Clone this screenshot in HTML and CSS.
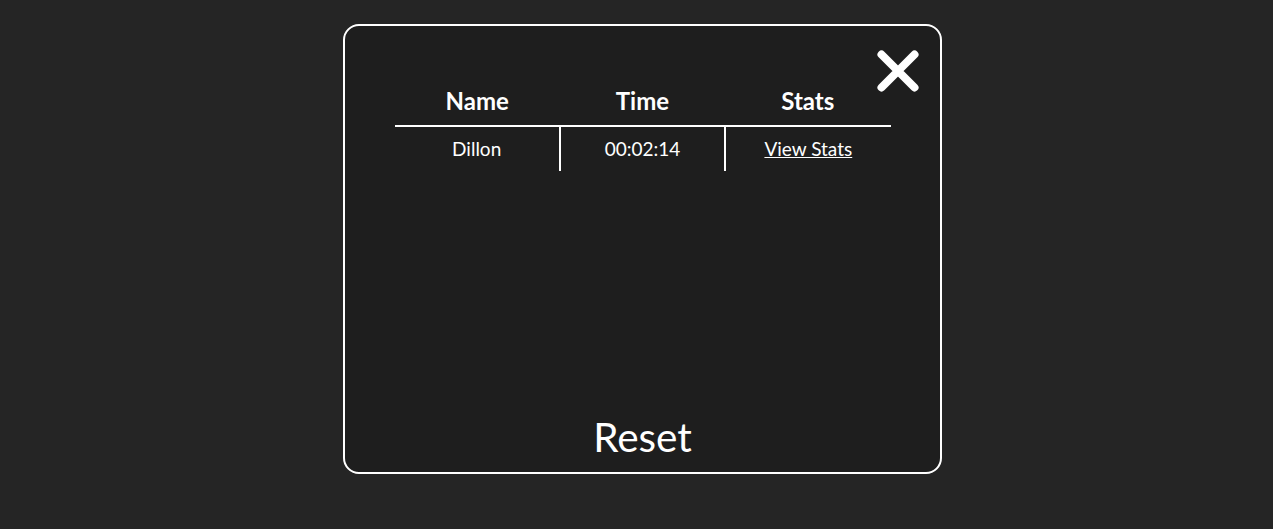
FILE: index.html
```html
<!DOCTYPE html>
<html>
<head>
<meta charset="utf-8">
<link rel="stylesheet" href="styles.css">
</head>
<body>
<div class="page">
  <div class="modal">
    <button class="close" aria-label="Close">
      <svg width="44" height="44" viewBox="0 0 44 44"><path d="M5.5 5.5 L38.5 38.5 M38.5 5.5 L5.5 38.5" stroke="#fff" stroke-width="8" stroke-linecap="round" fill="none"/></svg>
    </button>
    <table class="scores">
      <thead>
        <tr><th>Name</th><th>Time</th><th>Stats</th></tr>
      </thead>
      <tbody>
        <tr><td>Dillon</td><td>00:02:14</td><td><a href="#">View Stats</a></td></tr>
      </tbody>
    </table>
    <div class="spacer"></div>
    <button class="reset">Reset</button>
  </div>
</div>
</body>
</html>
```

FILE: styles.css
```css
html, body {
  margin: 0;
  padding: 0;
  background: #252525;
  font-family: Lato, "Open Sans", sans-serif;
  color: #fff;
}
.page {
  display: flex;
  justify-content: center;
  padding: 24px 0 0 12px;
}
.modal {
  position: relative;
  box-sizing: border-box;
  width: 599px;
  height: 450px;
  border: 2px solid #fff;
  border-radius: 16px;
  background: #1e1e1e;
  display: flex;
  flex-direction: column;
  align-items: center;
  padding-top: 61px;
}
.close {
  position: absolute;
  top: 23px;
  right: 20px;
  background: none;
  border: none;
  padding: 0;
  cursor: pointer;
  line-height: 0;
}
.scores {
  width: 496px;
  border-collapse: collapse;
  table-layout: fixed;
}
.scores th {
  font-size: 24px;
  font-weight: 700;
  height: 38px;
  padding: 0;
  border-bottom: 2px solid #fff;
  vertical-align: top;
  line-height: 28px;
}
.scores td {
  font-size: 19px;
  text-align: center;
  height: 42px;
  padding: 1px 0 1px;
  line-height: 22px;
}
.scores td + td {
  border-left: 2px solid #fff;
}
.scores a {
  color: #fff;
  text-decoration: underline;
}
.spacer { flex: 1; }
.reset {
  background: none;
  border: none;
  color: #fff;
  font-family: Lato, "Open Sans", sans-serif;
  font-size: 40.5px;
  padding: 0;
  margin-bottom: 12px;
  line-height: 46px;
  cursor: pointer;
}
```
